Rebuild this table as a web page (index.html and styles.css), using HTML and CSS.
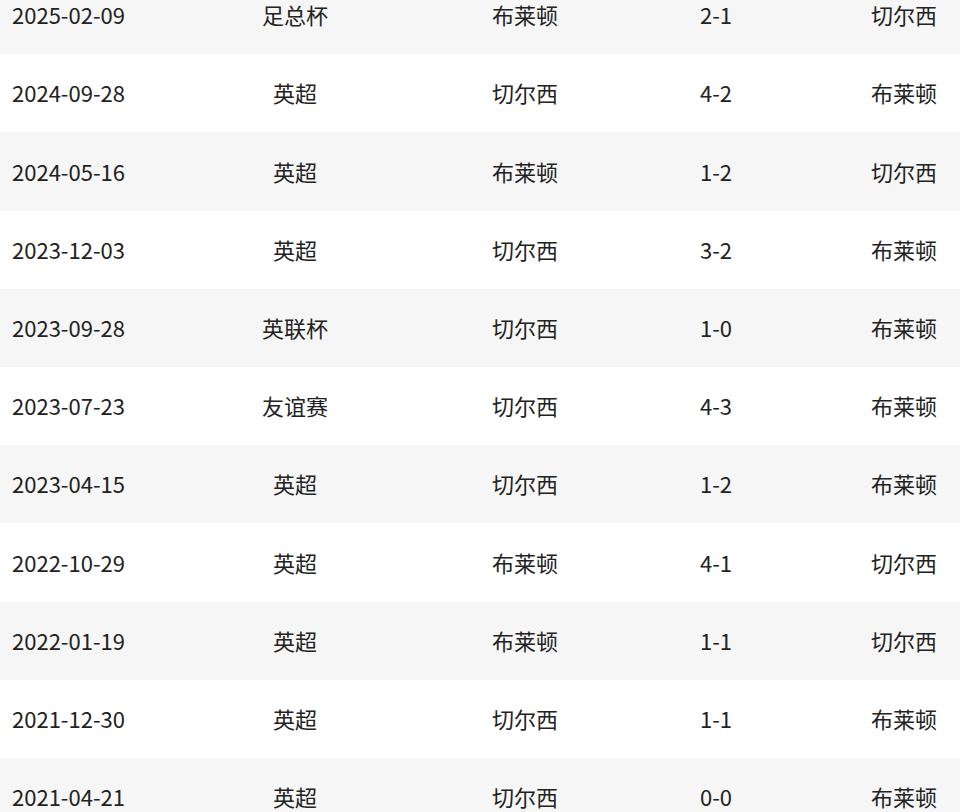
FILE: index.html
```html
<!DOCTYPE html>
<html lang="zh-CN">
<head>
<meta charset="utf-8">
<link rel="stylesheet" href="styles.css">
</head>
<body>
<div class="table">
  <div class="row"><div class="c date">2025-02-09</div><div class="c">足总杯</div><div class="c">布莱顿</div><div class="c">2-1</div><div class="c">切尔西</div></div>
  <div class="row"><div class="c date">2024-09-28</div><div class="c">英超</div><div class="c">切尔西</div><div class="c">4-2</div><div class="c">布莱顿</div></div>
  <div class="row"><div class="c date">2024-05-16</div><div class="c">英超</div><div class="c">布莱顿</div><div class="c">1-2</div><div class="c">切尔西</div></div>
  <div class="row"><div class="c date">2023-12-03</div><div class="c">英超</div><div class="c">切尔西</div><div class="c">3-2</div><div class="c">布莱顿</div></div>
  <div class="row"><div class="c date">2023-09-28</div><div class="c">英联杯</div><div class="c">切尔西</div><div class="c">1-0</div><div class="c">布莱顿</div></div>
  <div class="row"><div class="c date">2023-07-23</div><div class="c">友谊赛</div><div class="c">切尔西</div><div class="c">4-3</div><div class="c">布莱顿</div></div>
  <div class="row"><div class="c date">2023-04-15</div><div class="c">英超</div><div class="c">切尔西</div><div class="c">1-2</div><div class="c">布莱顿</div></div>
  <div class="row"><div class="c date">2022-10-29</div><div class="c">英超</div><div class="c">布莱顿</div><div class="c">4-1</div><div class="c">切尔西</div></div>
  <div class="row"><div class="c date">2022-01-19</div><div class="c">英超</div><div class="c">布莱顿</div><div class="c">1-1</div><div class="c">切尔西</div></div>
  <div class="row"><div class="c date">2021-12-30</div><div class="c">英超</div><div class="c">切尔西</div><div class="c">1-1</div><div class="c">布莱顿</div></div>
  <div class="row"><div class="c date">2021-04-21</div><div class="c">英超</div><div class="c">切尔西</div><div class="c">0-0</div><div class="c">布莱顿</div></div>
</div>
</body>
</html>
```
FILE: styles.css
```css
html, body {
  margin: 0;
  padding: 0;
  background: #fff;
  overflow: hidden;
}
body {
  font-family: "Noto Sans CJK SC", "Noto Sans", sans-serif;
  font-size: 22px;
  color: #222;
}
.table {
  margin-top: -23.9px;
}
.row {
  display: grid;
  grid-template-columns: 124px 342px 118px 264px 112px;
  height: 78.2px;
  align-items: center;
}
.row:nth-child(odd) {
  background: #f6f6f6;
}
.c {
  text-align: center;
  white-space: nowrap;
  padding-bottom: 2px;
}
.c.date {
  text-align: left;
  padding-left: 12px;
}
```
